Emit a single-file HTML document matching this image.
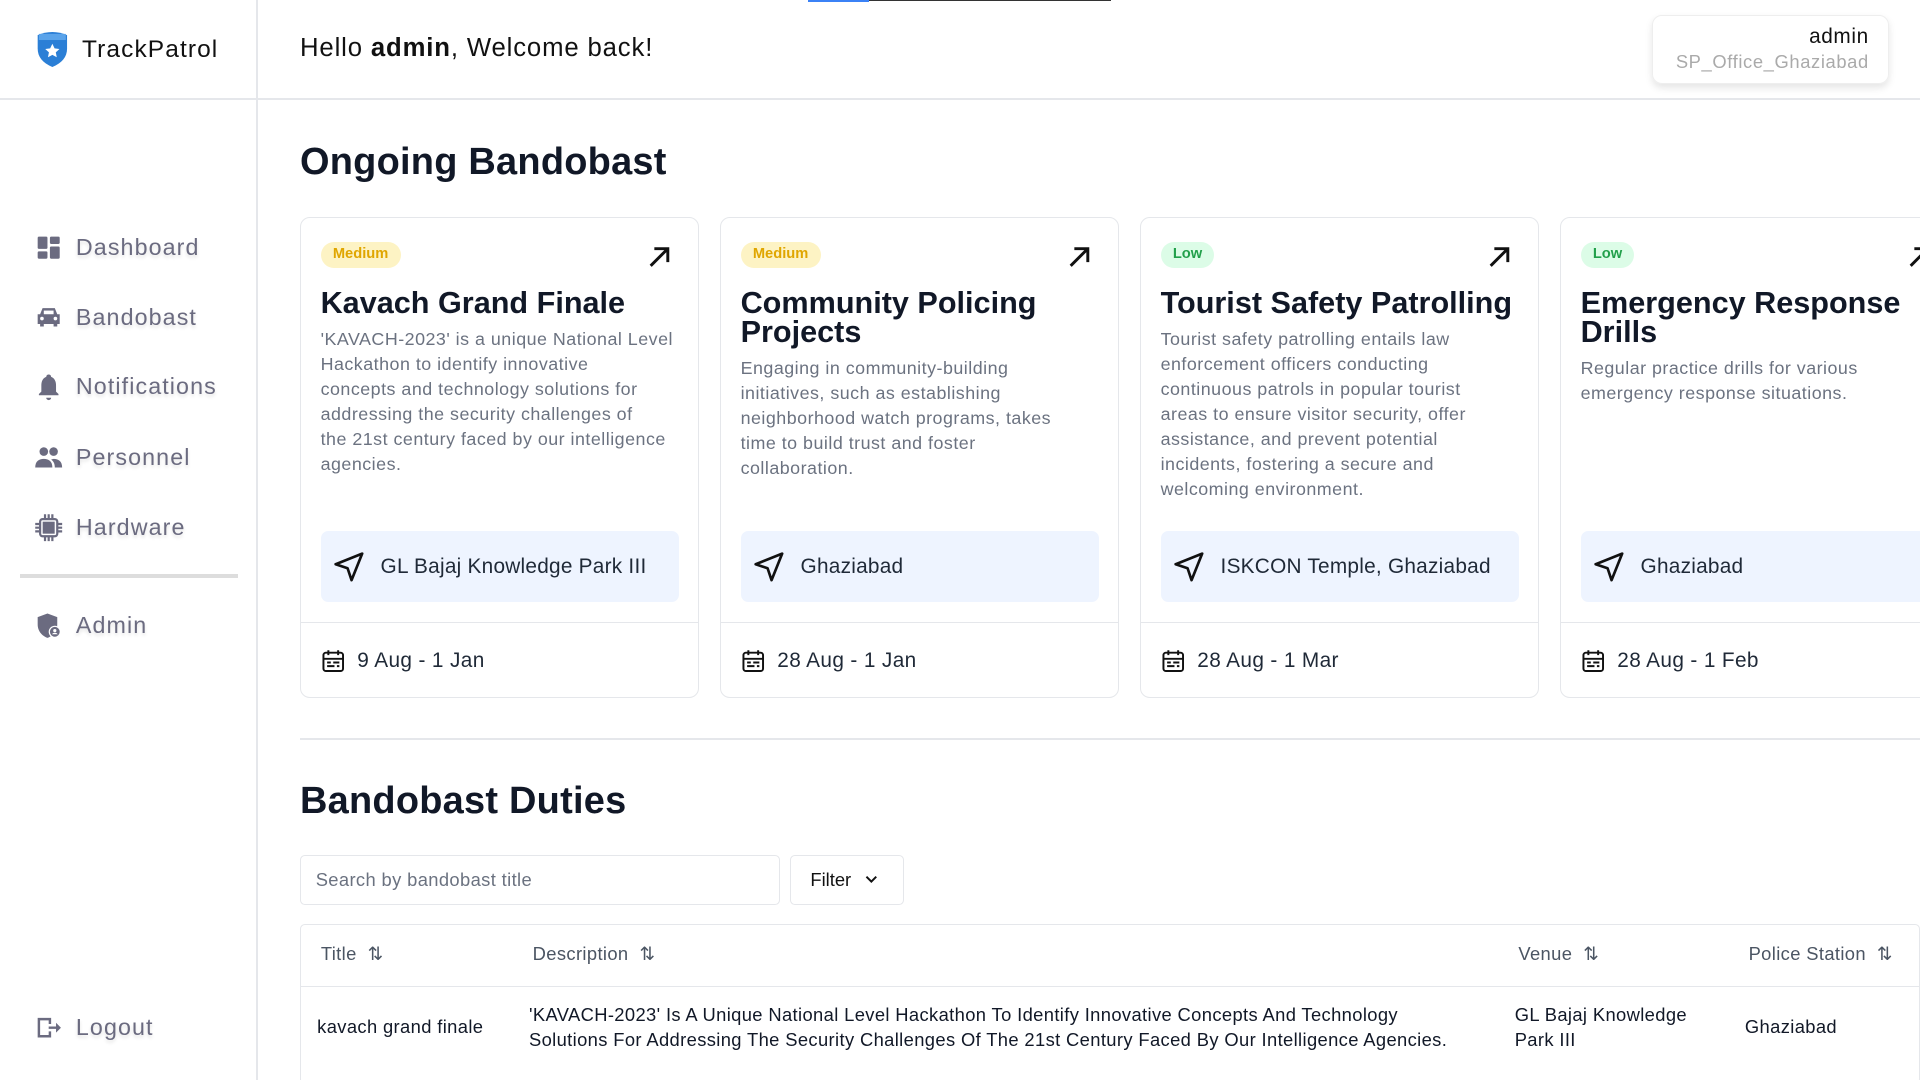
<!DOCTYPE html>
<html><head><meta charset="utf-8"><style>
*{box-sizing:border-box;margin:0;padding:0}
html,body{width:1920px;height:1080px;overflow:hidden;background:#fff}
#root{zoom:1.22449;width:1568px;height:882px;position:relative;font-family:"Liberation Sans",sans-serif;color:#111827;overflow:hidden}
.abs{position:absolute}
.side{left:0;top:0;width:211px;height:882px;border-right:2px solid #e5e7eb}
.hdr{left:0;top:80px;width:1568px;height:2px;background:#e5e7eb}
.nav{position:absolute;left:28px;display:flex;align-items:center;font-size:19px;letter-spacing:.9px;color:#6b6b80;text-shadow:0 2px 3px rgba(0,0,0,.12)}
.nav svg{width:24px;height:24px;margin-right:10px}
.card{position:absolute;top:177px;width:326px;height:393px;border:1px solid #e5e7eb;border-radius:8px;background:#fff;overflow:hidden}
.badge{position:absolute;left:16px;top:20px;height:21px;padding:0 10px;border-radius:11px;font-size:12px;font-weight:bold;line-height:21px}
.med{background:#fdf3c4;color:#e0a600}.low{background:#dcfce7;color:#22a04b}
.arrow{position:absolute;right:22px;top:22px;width:20px;height:20px}
.ct{position:absolute;left:16px;top:58px;width:310px;font-size:25px;font-weight:bold;line-height:24px;letter-spacing:0;color:#111827}
.cd{position:absolute;left:16px;font-size:14.6px;line-height:20.4px;color:#6b7280;white-space:nowrap;letter-spacing:.4px}
.loc{position:absolute;left:16px;top:256px;width:293px;height:58px;background:#eef4ff;border-radius:6px;display:flex;align-items:center;padding-left:10px;font-size:17px;color:#1f2937;letter-spacing:.2px}
.loc svg{width:26px;height:26px;margin-right:13px}
.cdiv{position:absolute;left:0;right:0;top:330px;height:1px;background:#e5e7eb}
.date{position:absolute;left:16px;top:352px;display:flex;align-items:center;font-size:17px;color:#1f2937;letter-spacing:.3px}
.date svg{width:20px;height:20px;margin-right:10px}
h2{position:absolute;left:245px;font-size:31px;font-weight:bold;letter-spacing:.2px;color:#111827}
.th{position:absolute;top:770px;font-size:15px;color:#4b5563;letter-spacing:.3px}
.td{position:absolute;font-size:15px;line-height:20.4px;color:#111827;white-space:nowrap;letter-spacing:.3px}
</style></head><body><div id="root">
<div class="abs" style="left:660px;top:0;width:247px;height:1px;background:#333"></div>
<div class="abs" style="left:660px;top:0;width:50px;height:2px;background:#3b82f6"></div>
<div class="abs side"></div>
<div class="abs hdr"></div>
<svg class="abs" style="left:28px;top:24px" width="30" height="32" viewBox="0 0 30 32"><path d="M3 5 Q15 0 27 5 L27 16 Q27 26 15 31 Q3 26 3 16Z" fill="#2b7fd6"/><rect x="4" y="4" width="22" height="5" fill="#5aa3ea"/><path d="M15 12 l1.8 3.8 4 .5-3 2.8.8 4-3.6-2-3.6 2 .8-4-3-2.8 4-.5z" fill="#fff"/></svg>
<div class="abs" style="left:67px;top:29px;font-size:20px;color:#111;letter-spacing:.9px">TrackPatrol</div>
<div class="abs" style="left:245px;top:28px;font-size:21px;color:#111;letter-spacing:.7px">Hello <b style="font-weight:600">admin</b>, Welcome back!</div>
<div class="abs" style="left:1349px;top:12px;width:194px;height:57px;border:1px solid #eee;border-radius:8px;box-shadow:0 3px 6px rgba(0,0,0,.1);text-align:right;padding:8px 16px 0 0">
<div style="font-size:17px;color:#111;line-height:20px;letter-spacing:.5px">admin</div><div style="font-size:15px;color:#aaa;line-height:20px;letter-spacing:.5px">SP_Office_Ghaziabad</div></div>

<div class="nav" style="top:190px"><svg viewBox="0 0 24 24" fill="#6b6b80"><rect x="3" y="3" width="8" height="10" rx="1"/><rect x="13" y="3" width="8" height="6" rx="1"/><rect x="3" y="15" width="8" height="6" rx="1"/><rect x="13" y="11" width="8" height="10" rx="1"/></svg>Dashboard</div>
<div class="nav" style="top:247px"><svg viewBox="0 0 24 24" fill="#6b6b80"><path d="M5 10 L7 5 H17 L19 10 H21 V18 H19 V20 H16 V18 H8 V20 H5 V18 H3 V10Z"/><rect x="8" y="7" width="8" height="3" fill="#fff"/><circle cx="6.5" cy="13.5" r="1.5" fill="#fff"/><circle cx="17.5" cy="13.5" r="1.5" fill="#fff"/></svg>Bandobast</div>
<div class="nav" style="top:304px"><svg viewBox="0 0 24 24" fill="#6b6b80"><path d="M12 2a2 2 0 0 1 2 2c3 1 4 4 4 7v5l2 2v1H4v-1l2-2v-5c0-3 1-6 4-7a2 2 0 0 1 2-2z"/><path d="M10 21h4a2 2 0 0 1-4 0z"/></svg>Notifications</div>
<div class="nav" style="top:362px"><svg viewBox="0 0 24 24" fill="#6b6b80"><circle cx="8" cy="7" r="3.5"/><circle cx="16" cy="7" r="3.5"/><path d="M1 20c0-5 3-7 7-7s7 2 7 7z"/><path d="M16 13c4 0 7 2 7 7h-6c0-3-1-5-3-6.5z"/></svg>Personnel</div>
<div class="nav" style="top:419px"><svg viewBox="0 0 24 24" fill="none" stroke="#6b6b80" stroke-width="1.8"><rect x="5" y="5" width="14" height="14" rx="2"/><rect x="8" y="8" width="8" height="8" fill="#6b6b80"/><path d="M9 1v4M12 1v4M15 1v4M9 19v4M12 19v4M15 19v4M1 9h4M1 12h4M1 15h4M19 9h4M19 12h4M19 15h4"/></svg>Hardware</div>
<div class="abs" style="left:16px;top:469px;width:178px;height:3px;background:#ddd"></div>
<div class="nav" style="top:499px"><svg viewBox="0 0 24 24" fill="#6b6b80"><path d="M11 2l8 3v6c0 5-3 9-8 11-5-2-8-6-8-11V5z"/><circle cx="17" cy="17" r="5" fill="#fff"/><circle cx="17" cy="17" r="4"/><circle cx="17" cy="16" r="1.3" fill="#fff"/><path d="M14.7 19a2.5 2 0 0 1 4.6 0z" fill="#fff"/></svg>Admin</div>
<div class="nav" style="top:827px"><svg viewBox="0 0 24 24" fill="#6b6b80"><path d="M3 4h11v5h-2V6H5v12h7v-3h2v5H3z"/><path d="M12 11h6V8l4 4-4 4v-3h-6z"/></svg>Logout</div>

<h2 style="top:115px">Ongoing Bandobast</h2>

<div class="card" style="left:245px"><div class="badge med">Medium</div><svg class="arrow" viewBox="0 0 20 20" fill="none" stroke="#111" stroke-width="2.4"><path d="M3 17L17 3M6 3h11v11"/></svg>
<div class="ct">Kavach Grand Finale</div><div class="cd" style="top:89px">'KAVACH-2023' is a unique National Level<br>Hackathon to identify innovative<br>concepts and technology solutions for<br>addressing the security challenges of<br>the 21st century faced by our intelligence<br>agencies.</div>
<div class="loc"><svg viewBox="0 0 24 24" fill="none" stroke="#111" stroke-width="2" stroke-linejoin="round"><path d="M22 2L2 10l9 3 3 9z"/></svg>GL Bajaj Knowledge Park III</div><div class="cdiv"></div>
<div class="date"><svg viewBox="0 0 20 20" fill="none" stroke="#111" stroke-width="1.6"><rect x="2" y="3" width="16" height="15" rx="2"/><path d="M6 1v4M14 1v4M2 8h16M5 11h3M10 11h5M5 14h6M13 14h2"/></svg>9 Aug - 1 Jan</div></div>

<div class="card" style="left:588px"><div class="badge med">Medium</div><svg class="arrow" viewBox="0 0 20 20" fill="none" stroke="#111" stroke-width="2.4"><path d="M3 17L17 3M6 3h11v11"/></svg>
<div class="ct">Community Policing Projects</div><div class="cd" style="top:113px">Engaging in community-building<br>initiatives, such as establishing<br>neighborhood watch programs, takes<br>time to build trust and foster<br>collaboration.</div>
<div class="loc"><svg viewBox="0 0 24 24" fill="none" stroke="#111" stroke-width="2" stroke-linejoin="round"><path d="M22 2L2 10l9 3 3 9z"/></svg>Ghaziabad</div><div class="cdiv"></div>
<div class="date"><svg viewBox="0 0 20 20" fill="none" stroke="#111" stroke-width="1.6"><rect x="2" y="3" width="16" height="15" rx="2"/><path d="M6 1v4M14 1v4M2 8h16M5 11h3M10 11h5M5 14h6M13 14h2"/></svg>28 Aug - 1 Jan</div></div>

<div class="card" style="left:931px"><div class="badge low">Low</div><svg class="arrow" viewBox="0 0 20 20" fill="none" stroke="#111" stroke-width="2.4"><path d="M3 17L17 3M6 3h11v11"/></svg>
<div class="ct">Tourist Safety Patrolling</div><div class="cd" style="top:89px">Tourist safety patrolling entails law<br>enforcement officers conducting<br>continuous patrols in popular tourist<br>areas to ensure visitor security, offer<br>assistance, and prevent potential<br>incidents, fostering a secure and<br>welcoming environment.</div>
<div class="loc"><svg viewBox="0 0 24 24" fill="none" stroke="#111" stroke-width="2" stroke-linejoin="round"><path d="M22 2L2 10l9 3 3 9z"/></svg>ISKCON Temple, Ghaziabad</div><div class="cdiv"></div>
<div class="date"><svg viewBox="0 0 20 20" fill="none" stroke="#111" stroke-width="1.6"><rect x="2" y="3" width="16" height="15" rx="2"/><path d="M6 1v4M14 1v4M2 8h16M5 11h3M10 11h5M5 14h6M13 14h2"/></svg>28 Aug - 1 Mar</div></div>

<div class="card" style="left:1274px"><div class="badge low">Low</div><svg class="arrow" viewBox="0 0 20 20" fill="none" stroke="#111" stroke-width="2.4"><path d="M3 17L17 3M6 3h11v11"/></svg>
<div class="ct">Emergency Response Drills</div><div class="cd" style="top:113px">Regular practice drills for various<br>emergency response situations.</div>
<div class="loc"><svg viewBox="0 0 24 24" fill="none" stroke="#111" stroke-width="2" stroke-linejoin="round"><path d="M22 2L2 10l9 3 3 9z"/></svg>Ghaziabad</div><div class="cdiv"></div>
<div class="date"><svg viewBox="0 0 20 20" fill="none" stroke="#111" stroke-width="1.6"><rect x="2" y="3" width="16" height="15" rx="2"/><path d="M6 1v4M14 1v4M2 8h16M5 11h3M10 11h5M5 14h6M13 14h2"/></svg>28 Aug - 1 Feb</div></div>

<div class="abs" style="left:245px;top:603px;width:1323px;height:1px;background:#e5e7eb"></div>
<h2 style="top:637px">Bandobast Duties</h2>
<div class="abs" style="left:245px;top:698px;width:392px;height:41px;border:1px solid #e5e7eb;border-radius:4px;padding-left:12px;line-height:39px;font-size:15px;color:#6b7280;letter-spacing:.3px">Search by bandobast title</div>
<div class="abs" style="left:645px;top:698px;width:93px;height:41px;border:1px solid #e5e7eb;border-radius:4px;padding-left:16px;line-height:39px;font-size:15px;color:#111">Filter <svg width="12" height="10" viewBox="0 0 12 10" style="margin-left:6px"><path d="M2 3l4 4 4-4" fill="none" stroke="#111" stroke-width="1.6"/></svg></div>
<div class="abs" style="left:245px;top:755px;width:1323px;height:130px;border:1px solid #e5e7eb;border-radius:4px"></div>
<div class="abs" style="left:246px;top:805px;width:1322px;height:1px;background:#e5e7eb"></div>
<div class="th" style="left:262px">Title &nbsp;⇅</div>
<div class="th" style="left:435px">Description &nbsp;⇅</div>
<div class="th" style="left:1240px">Venue &nbsp;⇅</div>
<div class="th" style="left:1428px">Police Station &nbsp;⇅</div>
<div class="td" style="left:259px;top:829px">kavach grand finale</div>
<div class="td" style="left:432px;top:819px">'KAVACH-2023' Is A Unique National Level Hackathon To Identify Innovative Concepts And Technology<br>Solutions For Addressing The Security Challenges Of The 21st Century Faced By Our Intelligence Agencies.</div>
<div class="td" style="left:1237px;top:819px">GL Bajaj Knowledge<br>Park III</div>
<div class="td" style="left:1425px;top:829px">Ghaziabad</div>
</div></body></html>
